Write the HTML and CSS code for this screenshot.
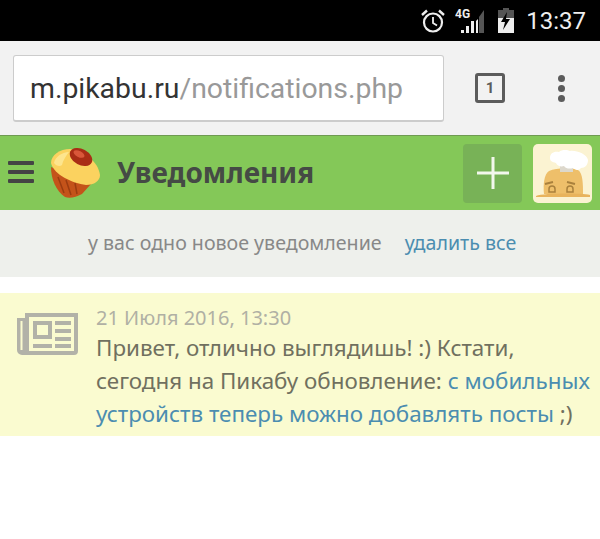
FILE: index.html
```html
<!DOCTYPE html>
<html lang="ru">
<head>
    <meta charset="UTF-8">
    <title>Уведомления</title>
    <link rel="stylesheet" href="styles.css">
</head>
<body>
    <!-- Status bar -->
    <div class="status-bar">
        <svg class="alarm" width="26" height="26" viewBox="0 0 26 26" fill="none" stroke="#eee">
            <circle cx="13" cy="14.5" r="9" stroke-width="2.2"/>
            <path d="M13 9v6l4 2.5" stroke-width="1.8"/>
            <path d="M2 7l5-4.5M24 7l-5-4.5" stroke-width="2.4"/>
        </svg>
        <svg class="signal" width="30" height="26" viewBox="0 0 30 26">
            <text x="0" y="10" class="signal-text">4G</text>
            <path d="M6 25h3v-3h-3zM11 25h3v-7h-3zM16 25h3v-12h-3zM21 25h2V11l-2 2z" fill="#eee"/>
            <path d="M24 25h5V2l-5 7z" fill="#555"/>
        </svg>
        <svg class="battery" width="16" height="25" viewBox="0 0 16 25">
            <path d="M5 0h6v2h5v23H0V2h5z" fill="#eee"/>
            <path d="M0 2h5V0h6v2h5v8H0z" fill="#555"/>
            <path d="M9 4L3 14h4l-2 8 7-11H8z" fill="#000"/>
        </svg>
        <span class="clock">13:37</span>
    </div>

    <!-- Browser toolbar -->
    <div class="toolbar">
        <div class="url-box"><span class="url-host">m.pikabu.ru</span>/notifications.php</div>
        <div class="tab-count">1</div>
        <div class="menu-dots"><i></i><i></i><i></i></div>
    </div>

    <!-- Site header -->
    <header class="site-header">
        <div class="burger"><i></i><i></i><i></i></div>
        <svg class="logo" width="54" height="52" viewBox="0 0 54 52">
            <path d="M3 20C3 32 8 44 17 50c5 2 11 0 17-3l9-10z" fill="#c4531a"/>
            <path d="M10 30l6 16M18 33l5 15M27 36l2 11" stroke="#9c3c10" stroke-width="1.5" fill="none"/>
            <path d="M3 16C3 8 12 2 22 2c14 2 28 12 30 26 0 6-6 10-14 10C24 36 6 28 3 16z" fill="#fbd25f"/>
            <path d="M6 16C7 10 14 5 21 5c-3 4-6 8-7 13-2 2-6 1-8-2z" fill="#fde58e"/>
            <ellipse cx="33" cy="10" rx="12" ry="8" transform="rotate(28 33 10)" fill="#a92d15"/>
            <ellipse cx="31" cy="7" rx="6" ry="3" transform="rotate(28 31 7)" fill="#d9573a"/>
        </svg>
        <h1>Уведомления</h1>
        <div class="add-button">
            <svg width="34" height="34" viewBox="0 0 34 34"><path d="M17 1v32M1 17h32" stroke="#f2f7ec" stroke-width="3"/></svg>
        </div>
        <div class="avatar">
            <svg width="59" height="59" viewBox="0 0 59 59">
                <path d="M11 50c-1-9 0-20 5-23 8-4 24-3 29-1 5 3 5 15 5 24z" fill="#eebf6a"/>
                <path d="M3 52c8-3 44-3 54-1v2H3z" fill="#e8b35c"/>
                <path d="M12 40l8-2M34 38l8 2" stroke="#a9803c" stroke-width="2"/>
                <path d="M16 48v-3a3 3 0 0 1 6 0v3zM34 48v-3a3 3 0 0 1 6 0v3z" fill="none" stroke="#a9803c" stroke-width="1.5"/>
                <path d="M27 28V18h13v10z" fill="#ddd8cc"/>
                <path d="M17 14c0-5 4-7 9-6 3-3 9-2 11-1 6-1 17 3 18 9 0 5-3 8-7 8-2 3-6 2-8 0-3 1-7 1-9-2-3 1-7 0-8-3-4-1-6-2-6-5z" fill="#fff"/>
            </svg>
        </div>
    </header>

    <!-- Summary -->
    <div class="summary">
        <span class="summary-text">у вас одно новое уведомление</span>
        <a class="link" href="#">удалить все</a>
    </div>

    <!-- Notification -->
    <div class="notice">
        <svg class="notice-icon" width="61" height="42" viewBox="0 0 61 42" fill="#b2b2a8">
            <path fill-rule="evenodd" d="M8 0h53v38a4 4 0 0 1-4 4H5a5 5 0 0 1-5-5V5h8zM3.500 8v29h2V8zM12 4v34h45V4z"/>
            <path fill-rule="evenodd" d="M16 8h19v18H16zM20 12v10h11V12z"/>
            <path d="M38 8h16v4H38zM38 16h16v4H38zM38 24h16v4H38zM16 31h19v4H16zM38 31h16v4H38z"/>
        </svg>
        <div class="notice-body">
            <div class="notice-date">21 Июля 2016, 13:30</div>
            <div class="notice-text">Привет, отлично выглядишь! :) Кстати,<br>сегодня на Пикабу обновление: <a class="link" href="#">с мобильных<br>устройств теперь можно добавлять посты</a> ;)</div>
        </div>
    </div>
</body>
</html>
```

FILE: styles.css
```css
body {
    margin: 0;
    background: #fff;
    font-family: 'Noto Sans', 'Open Sans', sans-serif;
    overflow: hidden;
}

/* Status bar */
.status-bar {
    height: 41px;
    background: #000;
    display: flex;
    align-items: center;
    justify-content: flex-end;
    padding-right: 14px;
    color: #eee;
}
.alarm {
    margin-right: 9px;
}
.signal {
    margin-right: 13px;
}
.signal-text {
    font-family: 'Roboto', sans-serif;
    font-size: 12px;
    font-weight: 700;
    fill: #eee;
}
.battery {
    margin-right: 12px;
}
.clock {
    font-family: 'Roboto', sans-serif;
    font-size: 24px;
}

/* Browser toolbar */
.toolbar {
    height: 94px;
    background: #f2f2f2;
    display: flex;
    align-items: center;
    box-sizing: border-box;
    padding-left: 13px;
}
.url-box {
    width: 431px;
    height: 67px;
    box-sizing: border-box;
    background: #fff;
    border: 1px solid #ccc;
    border-bottom-width: 2px;
    border-radius: 3px;
    padding-left: 16px;
    font-family: 'Roboto', sans-serif;
    font-size: 28.4px;
    line-height: 65px;
    color: #999;
    white-space: nowrap;
}
.url-host {
    color: #333;
}
.tab-count {
    width: 30px;
    height: 30px;
    box-sizing: border-box;
    margin-left: 31px;
    border: 3px solid #5c5c5c;
    border-radius: 3px;
    font-family: 'Roboto', sans-serif;
    font-size: 15px;
    font-weight: 700;
    line-height: 24px;
    text-align: center;
    color: #5c5c5c;
}
.menu-dots {
    margin-left: 53px;
    display: flex;
    flex-direction: column;
    gap: 3px;
}
.menu-dots i {
    width: 7px;
    height: 7px;
    border-radius: 50%;
    background: #5c5c5c;
}

/* Site header */
.site-header {
    height: 75px;
    background: #84c858;
    border-top: 1px solid #6f9a52;
    box-sizing: border-box;
    display: flex;
    align-items: center;
}
.burger {
    margin: 0 0 2px 8px;
    display: flex;
    flex-direction: column;
    gap: 5px;
}
.burger i {
    width: 26px;
    height: 4px;
    border-radius: 1px;
    background: #444;
}
.logo {
    margin-left: 14px;
}
h1 {
    margin: 0 0 2px 15px;
    flex: 1;
    font-size: 28px;
    font-weight: 700;
    color: #454a45;
}
.add-button {
    width: 59px;
    height: 59px;
    border-radius: 4px;
    background: #78b257;
    display: flex;
    align-items: center;
    justify-content: center;
}
.avatar {
    width: 59px;
    height: 59px;
    margin: 0 8px 0 11px;
    border-radius: 5px;
    background: #fbf3d2;
    overflow: hidden;
}

/* Summary */
.summary {
    height: 67px;
    background: #eef0ec;
    display: flex;
    align-items: center;
    box-sizing: border-box;
    padding: 0 0 2px 88px;
    font-size: 19.6px;
}
.summary-text {
    color: #888;
}
.summary .link {
    margin-left: 23px;
}
.link {
    color: #4b8db0;
    text-decoration: none;
}

/* Notification */
.notice {
    margin-top: 16px;
    height: 143px;
    box-sizing: border-box;
    background: #fafbd0;
    display: flex;
    padding: 12px 0 0 17px;
}
.notice-icon {
    margin-top: 8px;
    flex: none;
}
.notice-body {
    margin-left: 18px;
    white-space: nowrap;
}
.notice-date {
    font-size: 20px;
    line-height: 26px;
    color: #b0b0a4;
}
.notice-text {
    font-size: 22.4px;
    line-height: 33px;
    color: #70705f;
}
```
